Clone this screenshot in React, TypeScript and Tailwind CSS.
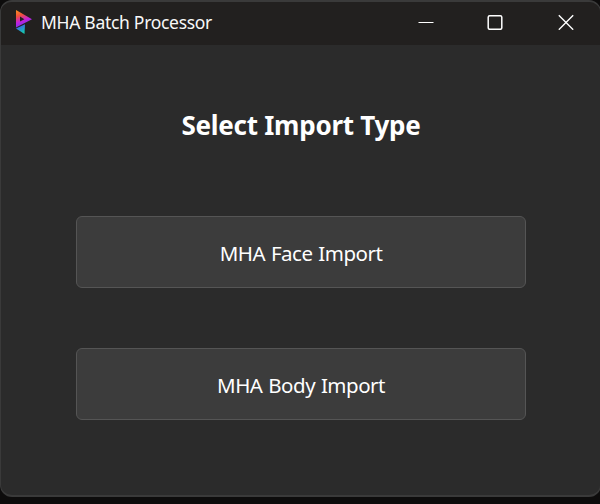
import React from "react";

function Logo() {
  return (
    <svg width="18" height="26" viewBox="0 0 18 26" className="mb-[3px] shrink-0">
      <defs>
        <linearGradient id="upper" x1="0" y1="0" x2="0.35" y2="1">
          <stop offset="0" stopColor="#f7941d" />
          <stop offset="0.35" stopColor="#f0503c" />
          <stop offset="0.68" stopColor="#c020e0" />
          <stop offset="1" stopColor="#7038e8" />
        </linearGradient>
        <linearGradient id="lower" x1="0" y1="0" x2="0.5" y2="1">
          <stop offset="0" stopColor="#6a3fe0" />
          <stop offset="0.5" stopColor="#2f83d8" />
          <stop offset="1" stopColor="#16c8b0" />
        </linearGradient>
      </defs>
      <path
        d="M1 1 L17 10.2 L1 18.6 Z M5 7.6 V12.6 L9.4 10.2 Z"
        fill="url(#upper)"
        fillRule="evenodd"
      />
      <path d="M1 19.6 L10 15.2 L9.5 25 Z" fill="url(#lower)" />
    </svg>
  );
}

function TitleBar() {
  return (
    <header className="flex h-[43px] items-center bg-[#22201f] pl-[14px]">
      <Logo />
      <span className="mb-[2px] ml-[8px] text-[17.5px] leading-none tracking-[-0.3px] whitespace-nowrap text-[#f8f8f8]">
        MHA Batch Processor
      </span>
      <div className="mb-[3px] ml-auto flex h-[40px]">
        <button className="flex w-[69px] items-center justify-center" aria-label="Minimize">
          <svg width="16" height="16" viewBox="0 0 16 16">
            <path d="M0.5 8.5 H15.5" stroke="#fff" strokeWidth="1" />
          </svg>
        </button>
        <button className="flex w-[69px] items-center justify-center" aria-label="Maximize">
          <svg width="16" height="16" viewBox="0 0 16 16">
            <rect x="1.2" y="1.7" width="13.6" height="13.6" rx="1.5" fill="none" stroke="#fff" strokeWidth="1.5" />
          </svg>
        </button>
        <button className="flex w-[71px] items-center justify-center pl-[2px]" aria-label="Close">
          <svg width="16" height="16" viewBox="0 0 16 16">
            <path d="M0.8 1.3 L15.2 15.7 M15.2 1.3 L0.8 15.7" stroke="#fff" strokeWidth="1.4" />
          </svg>
        </button>
      </div>
    </header>
  );
}

function ImportButton({ label }: { label: string }) {
  return (
    <button className="flex h-[72px] w-[450px] items-center justify-center rounded-[6px] border-[1.5px] border-[#555555] bg-[#3c3c3c] pt-[3px] text-white">
      <span className="text-[20.5px] leading-none tracking-[-0.5px] [word-spacing:1px] whitespace-nowrap">{label}</span>
    </button>
  );
}

export default function App() {
  return (
    <div className="h-[504px] w-[600px] overflow-hidden bg-[#0d0c0c] font-['Noto_Sans','Open_Sans',sans-serif]">
      <div className="flex h-[497px] w-[601px] flex-col overflow-hidden rounded-[12px] border border-y-2 border-[#3a3a3a] bg-[#2b2b2b]">
        <TitleBar />
        <main className="flex flex-1 flex-col items-center pl-px">
          <h1 className="mt-[66px] text-[26px] leading-[28px] font-bold tracking-[-0.25px] whitespace-nowrap text-white">
            Select Import Type
          </h1>
          <div className="mt-[77px] flex flex-col gap-[60px]">
            <ImportButton label="MHA Face Import" />
            <ImportButton label="MHA Body Import" />
          </div>
        </main>
      </div>
    </div>
  );
}
